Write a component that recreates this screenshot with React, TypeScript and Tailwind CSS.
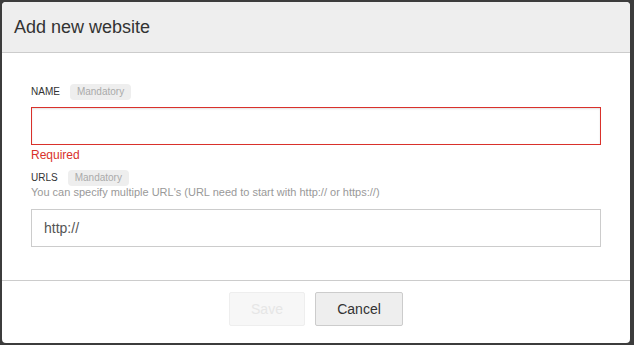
export default function App() {
  return (
    <div className="w-[634px] h-[345px] bg-[#3c3c3c] pt-[2px] pl-[2px] pr-[4px] pb-[2px]" style={{ fontFamily: '"Liberation Sans", Arial, sans-serif' }}>
      <div className="w-full h-full bg-white rounded-[4px] overflow-hidden flex flex-col">
        <div className="h-[51px] shrink-0 bg-[#eeeeee] border-b border-[#cccccc] flex items-center pl-[12px]">
          <span className="text-[18px] text-[#333333]">Add new website</span>
        </div>
        <div className="flex-1 px-[29px] pt-[30px]">
          <div className="flex items-center gap-[10px] h-[17px]">
            <span className="text-[10px] text-[#333333]">NAME</span>
            <span className="text-[10px] text-[#aaaaaa] bg-[#eeeeee] rounded-[4px] px-[7px] h-[16px] flex items-center">Mandatory</span>
          </div>
          <div className="mt-[7px] h-[38px] border border-[#d9312b] shadow-[inset_0_1px_2px_rgba(0,0,0,0.12)]"></div>
          <div className="mt-[3px] text-[12px] text-[#d9312b] leading-[14px]">Required</div>
          <div className="mt-[7px] flex items-center gap-[10px] h-[17px]">
            <span className="text-[10px] text-[#333333]">URLS</span>
            <span className="text-[10px] text-[#aaaaaa] bg-[#eeeeee] rounded-[4px] px-[7px] h-[16px] flex items-center">Mandatory</span>
          </div>
          <div className="text-[11px] text-[#999999] leading-[14px] mt-[-1px]">You can specify multiple URL's (URL need to start with http:// or https://)</div>
          <div className="mt-[10px] h-[38px] border border-[#cccccc] flex items-center pl-[12px] text-[14px] text-[#555555]">http://</div>
        </div>
        <div className="h-[63px] shrink-0 border-t border-[#cccccc] flex justify-center items-start pt-[11px] gap-[10px]">
          <button className="w-[76px] h-[34px] border border-[#eeeeee] bg-[#f7f7f7] text-[14px] text-[#e6e6e6] rounded-[2px]">Save</button>
          <button className="w-[88px] h-[34px] border border-[#cccccc] bg-[#eeeeee] text-[14px] text-[#333333] rounded-[2px]">Cancel</button>
        </div>
      </div>
    </div>
  );
}
